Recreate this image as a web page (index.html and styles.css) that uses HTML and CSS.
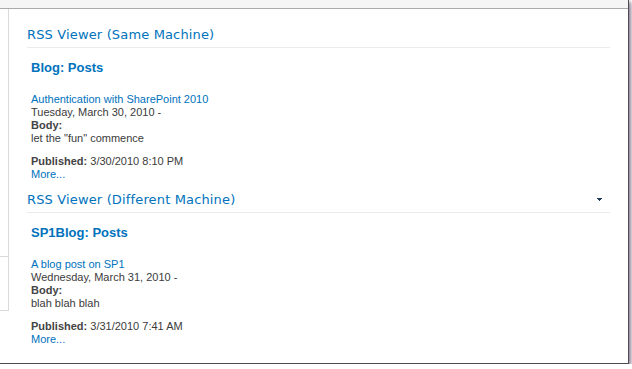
FILE: index.html
```html
<!DOCTYPE html>
<html lang="en">
<head>
    <meta charset="UTF-8">
    <title>RSS Viewer</title>
    <link rel="stylesheet" href="styles.css">
</head>
<body>
    <div class="frame">
        <div class="topbar"></div>
        <div class="page">
            <div class="nav">
                <div class="nav-block nav-first"></div>
                <div class="nav-block nav-second"></div>
            </div>
            <div class="zone">
                <div class="webpart">
                    <div class="wp-title">
                        <span>RSS Viewer (Same Machine)</span>
                    </div>
                    <div class="wp-body">
                        <h3 class="feed-title">Blog: Posts</h3>
                        <div class="item">
                            <a class="link" href="#">Authentication with SharePoint 2010</a>
                            <div>Tuesday, March 30, 2010 -</div>
                            <div><b>Body:</b></div>
                            <div>let the "fun" commence</div>
                            <div class="pub"><b>Published:</b> 3/30/2010 8:10 PM</div>
                            <a class="link" href="#">More...</a>
                        </div>
                    </div>
                </div>
                <div class="webpart">
                    <div class="wp-title">
                        <span>RSS Viewer (Different Machine)</span>
                        <svg class="wp-menu" width="5" height="3" viewBox="0 0 5 3">
                            <rect x="0" y="0" width="5" height="1" fill="#1c3b59"/>
                            <rect x="1" y="1" width="3" height="1" fill="#1c3b59"/>
                            <rect x="2" y="2" width="1" height="1" fill="#1c3b59"/>
                        </svg>
                    </div>
                    <div class="wp-body">
                        <h3 class="feed-title">SP1Blog: Posts</h3>
                        <div class="item">
                            <a class="link" href="#">A blog post on SP1</a>
                            <div>Wednesday, March 31, 2010 -</div>
                            <div><b>Body:</b></div>
                            <div>blah blah blah</div>
                            <div class="pub"><b>Published:</b> 3/31/2010 7:41 AM</div>
                            <a class="link" href="#">More...</a>
                        </div>
                    </div>
                </div>
            </div>
        </div>
    </div>
</body>
</html>
```

FILE: styles.css
```css
body {
    margin: 0;
    background-color: #fff;
    font-family: "Liberation Sans", Arial, sans-serif;
    font-size: 11px;
    color: #3b3b3b;
    overflow: hidden;
}
.frame {
    box-sizing: border-box;
    width: 629px;
    height: 364px;
    background-color: #fff;
    border-right: 1px solid #4e4a52;
    border-bottom: 1px solid #4e4a52;
    box-shadow: 2px 2px 4px rgba(70, 50, 85, 0.65);
}
.topbar {
    height: 8px;
    background-color: #f5f5f5;
    border-bottom: 1px solid #ababab;
}
.page {
    display: flex;
    align-items: flex-start;
}
.nav {
    width: 8px;
    flex-shrink: 0;
    border-right: 1px solid #dadada;
}
.nav-first {
    height: 247px;
    border-bottom: 1px solid #dadada;
}
.nav-second {
    height: 53px;
    border-bottom: 1px solid #dadada;
}
.zone {
    flex: 1;
    padding: 17px 18px 0 18px;
}
.webpart + .webpart {
    margin-top: 10px;
}
.wp-title {
    display: flex;
    justify-content: space-between;
    align-items: center;
    padding: 0 8px 4px 0;
    border-bottom: 1px solid #ebebeb;
    font-family: "DejaVu Sans", Verdana, sans-serif;
    font-size: 13px;
    line-height: 17px;
    letter-spacing: 0.15px;
    color: #0072bc;
}
.wp-menu {
    display: block;
}
.wp-body {
    padding-left: 4px;
}
.feed-title {
    margin: 12px 0 0 0;
    font-size: 13px;
    line-height: 15px;
    font-weight: bold;
    color: #0072bc;
}
.item {
    margin-top: 18px;
    line-height: 13px;
}
.link {
    display: block;
    color: #0072bc;
    text-decoration: none;
}
.item b {
    color: #444;
}
.pub {
    margin-top: 10px;
}
```
